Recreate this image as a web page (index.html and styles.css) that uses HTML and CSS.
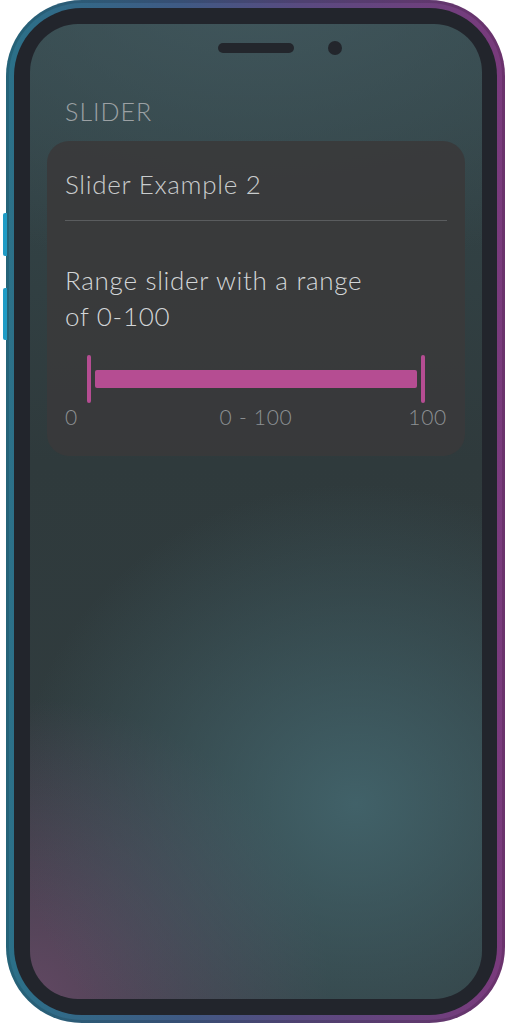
FILE: index.html
```html
<!DOCTYPE html>
<html lang="en">
<head>
<meta charset="utf-8">
<title>Slider</title>
<link rel="stylesheet" href="styles.css">
</head>
<body>
<div class="phone">
  <span class="side-btn btn-a"></span>
  <span class="side-btn btn-b"></span>
  <div class="bezel">
    <div class="screen">
      <div class="notch">
        <span class="speaker"></span>
        <span class="camera"></span>
      </div>
      <div class="section-title">SLIDER</div>
      <div class="card">
        <div class="card-title">Slider Example 2</div>
        <div class="divider"></div>
        <p class="desc">Range slider with a range<br>of 0-100</p>
        <div class="slider">
          <span class="thumb"></span>
          <span class="bar"></span>
          <span class="thumb"></span>
        </div>
        <div class="labels">
          <span class="lab-min">0</span>
          <span class="lab-val">0 - 100</span>
          <span class="lab-max">100</span>
        </div>
      </div>
    </div>
  </div>
</div>
</body>
</html>
```
FILE: styles.css
```css
html, body {
  margin: 0;
  padding: 0;
  background: #ffffff;
}
body {
  width: 512px;
  height: 1024px;
  font-family: Lato, "Noto Sans", sans-serif;
}
.phone {
  position: relative;
  box-sizing: border-box;
  margin-left: 6px;
  width: 499px;
  height: 1023px;
  padding: 8px;
  border-radius: 76px;
  background: linear-gradient(90deg, #2b7189 0%, #3f5a84 35%, #5a4a80 60%, #7a3a7c 100%);
  box-shadow: inset 0 0 0 3px rgba(0,0,0,0.12);
}
.side-btn {
  position: absolute;
  left: -3px;
  width: 4px;
  border-radius: 2px 0 0 2px;
  background: #1f9cc6;
}
.btn-a { top: 213px; height: 43px; }
.btn-b { top: 288px; height: 52px; }
.bezel {
  box-sizing: border-box;
  height: 100%;
  padding: 16px 15px 16px 16px;
  border-radius: 68px;
  background: #22252c;
}
.screen {
  box-sizing: border-box;
  height: 100%;
  border-radius: 48px;
  overflow: hidden;
  padding: 17px 17px 0 17px;
  background:
    radial-gradient(ellipse 340px 320px at 72% 80%, rgba(68,104,112,0.85), rgba(68,104,112,0) 100%),
    radial-gradient(ellipse 300px 300px at 0% 100%, rgba(100,72,100,0.95), rgba(100,72,100,0) 100%),
    radial-gradient(ellipse 520px 300px at 50% -5%, rgba(66,88,94,0.9), rgba(66,88,94,0) 100%),
    linear-gradient(180deg, #34474b 0%, #2f3a3c 45%, #313d40 100%);
}
.notch {
  display: flex;
  align-items: center;
  gap: 34px;
  height: 14px;
  padding-left: 171px;
}
.speaker {
  width: 76px;
  height: 10px;
  border-radius: 5px;
  background: #23262c;
}
.camera {
  width: 14px;
  height: 14px;
  border-radius: 50%;
  background: #23262c;
}
.section-title {
  margin-top: 41px;
  padding-left: 18px;
  font-size: 25px;
  line-height: 30px;
  font-weight: 300;
  color: #9ca1a4;
  letter-spacing: 1px;
}
.card {
  margin-top: 15px;
  padding: 28px 18px 27px 18px;
  border-radius: 22px;
  background: rgba(58,58,59,0.92);
}
.card-title {
  font-size: 26px;
  line-height: 30px;
  font-weight: 300;
  letter-spacing: 0.7px;
  color: #c9cccd;
}
.divider {
  margin-top: 21px;
  height: 1px;
  background: #5a5c5e;
}
.desc {
  margin: 41px 0 0 0;
  font-size: 26px;
  line-height: 36px;
  font-weight: 300;
  letter-spacing: 0.7px;
  color: #d3d6d8;
}
.slider {
  display: flex;
  align-items: center;
  gap: 4px;
  margin-top: 21px;
  height: 48px;
  padding: 0 22px;
}
.thumb {
  width: 4px;
  height: 48px;
  border-radius: 2px;
  background: #b54d92;
}
.bar {
  flex: 1;
  height: 18px;
  border-radius: 2px;
  background: #b54d92;
}
.labels {
  display: grid;
  grid-template-columns: 1fr auto 1fr;
  margin-top: 2px;
  font-size: 21px;
  line-height: 24px;
  font-weight: 300;
  letter-spacing: 0.7px;
  color: #8d9194;
}
.lab-min { text-align: left; }
.lab-val { text-align: center; }
.lab-max { text-align: right; }
```
